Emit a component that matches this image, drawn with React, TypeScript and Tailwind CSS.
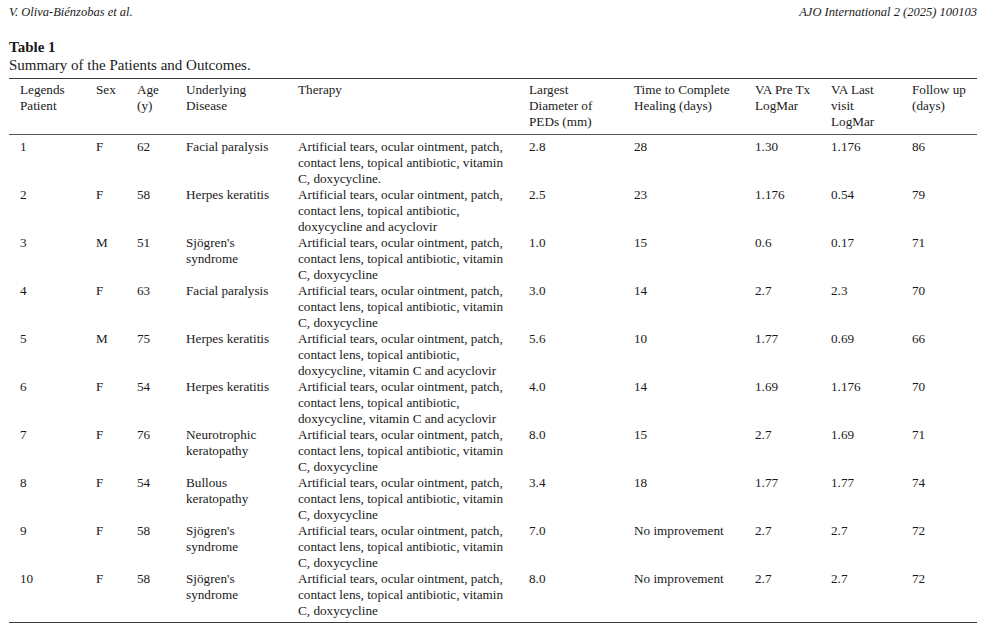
import React from "react";

type Row = {
  id: string;
  sex: string;
  age: string;
  disease: string[];
  therapy: string[];
  diameter: string;
  healing: string;
  vaPre: string;
  vaLast: string;
  follow: string;
};

const A1 = "Artificial tears, ocular ointment, patch,";
const A2 = "contact lens, topical antibiotic, vitamin";

const rows: Row[] = [
  { id: "1", sex: "F", age: "62", disease: ["Facial paralysis"], therapy: [A1, A2, "C, doxycycline."], diameter: "2.8", healing: "28", vaPre: "1.30", vaLast: "1.176", follow: "86" },
  { id: "2", sex: "F", age: "58", disease: ["Herpes keratitis"], therapy: [A1, "contact lens, topical antibiotic,", "doxycycline and acyclovir"], diameter: "2.5", healing: "23", vaPre: "1.176", vaLast: "0.54", follow: "79" },
  { id: "3", sex: "M", age: "51", disease: ["Sjögren's", "syndrome"], therapy: [A1, A2, "C, doxycycline"], diameter: "1.0", healing: "15", vaPre: "0.6", vaLast: "0.17", follow: "71" },
  { id: "4", sex: "F", age: "63", disease: ["Facial paralysis"], therapy: [A1, A2, "C, doxycycline"], diameter: "3.0", healing: "14", vaPre: "2.7", vaLast: "2.3", follow: "70" },
  { id: "5", sex: "M", age: "75", disease: ["Herpes keratitis"], therapy: [A1, "contact lens, topical antibiotic,", "doxycycline, vitamin C and acyclovir"], diameter: "5.6", healing: "10", vaPre: "1.77", vaLast: "0.69", follow: "66" },
  { id: "6", sex: "F", age: "54", disease: ["Herpes keratitis"], therapy: [A1, "contact lens, topical antibiotic,", "doxycycline, vitamin C and acyclovir"], diameter: "4.0", healing: "14", vaPre: "1.69", vaLast: "1.176", follow: "70" },
  { id: "7", sex: "F", age: "76", disease: ["Neurotrophic", "keratopathy"], therapy: [A1, A2, "C, doxycycline"], diameter: "8.0", healing: "15", vaPre: "2.7", vaLast: "1.69", follow: "71" },
  { id: "8", sex: "F", age: "54", disease: ["Bullous", "keratopathy"], therapy: [A1, A2, "C, doxycycline"], diameter: "3.4", healing: "18", vaPre: "1.77", vaLast: "1.77", follow: "74" },
  { id: "9", sex: "F", age: "58", disease: ["Sjögren's", "syndrome"], therapy: [A1, A2, "C, doxycycline"], diameter: "7.0", healing: "No improvement", vaPre: "2.7", vaLast: "2.7", follow: "72" },
  { id: "10", sex: "F", age: "58", disease: ["Sjögren's", "syndrome"], therapy: [A1, A2, "C, doxycycline"], diameter: "8.0", healing: "No improvement", vaPre: "2.7", vaLast: "2.7", follow: "72" },
];

const headers: string[][] = [
  ["Legends", "Patient"],
  ["Sex"],
  ["Age", "(y)"],
  ["Underlying", "Disease"],
  ["Therapy"],
  ["Largest", "Diameter of", "PEDs (mm)"],
  ["Time to Complete", "Healing (days)"],
  ["VA Pre Tx", "LogMar"],
  ["VA Last", "visit", "LogMar"],
  ["Follow up", "(days)"],
];

const grid = "grid grid-cols-[76px_41px_49px_112px_231px_105px_121px_76px_81px_1fr]";

function Lines({ lines }: { lines: string[] }) {
  return (
    <div className="flex flex-col">
      {lines.map((l, i) => (
        <span key={i} className="whitespace-nowrap">
          {l}
        </span>
      ))}
    </div>
  );
}

export default function App() {
  return (
    <div
      className="h-[641px] w-[1000px] bg-white px-[9px] text-[#1a1a1a]"
      style={{ fontFamily: '"Liberation Serif", serif' }}
    >
      {/* Running header */}
      <div className="flex justify-between pr-[14px] pt-[4px] text-[12.5px] italic leading-[16px]">
        <span>V. Oliva-Biénzobas et al.</span>
        <span>AJO International 2 (2025) 100103</span>
      </div>

      {/* Caption */}
      <div className="mt-[18px] text-[15px] leading-[18px]">
        <p className="font-bold">Table 1</p>
        <p>Summary of the Patients and Outcomes.</p>
      </div>

      {/* Table */}
      <div className="mr-[14px] mt-[4px] border-t-[1.5px] border-b-[1.5px] border-[#3a3a3a] pb-[3px] text-[13.2px] leading-[16px]">
        <div className={`${grid} border-b border-[#555] pb-[4px] pl-[11px] pt-[3px]`}>
          {headers.map((h, i) => (
            <Lines key={i} lines={h} />
          ))}
        </div>
        <div className="pl-[11px] pt-[4px]">
          {rows.map((r) => (
            <div key={r.id} className={grid}>
              <span>{r.id}</span>
              <span>{r.sex}</span>
              <span>{r.age}</span>
              <Lines lines={r.disease} />
              <Lines lines={r.therapy} />
              <span>{r.diameter}</span>
              <span>{r.healing}</span>
              <span>{r.vaPre}</span>
              <span>{r.vaLast}</span>
              <span>{r.follow}</span>
            </div>
          ))}
        </div>
      </div>
    </div>
  );
}
